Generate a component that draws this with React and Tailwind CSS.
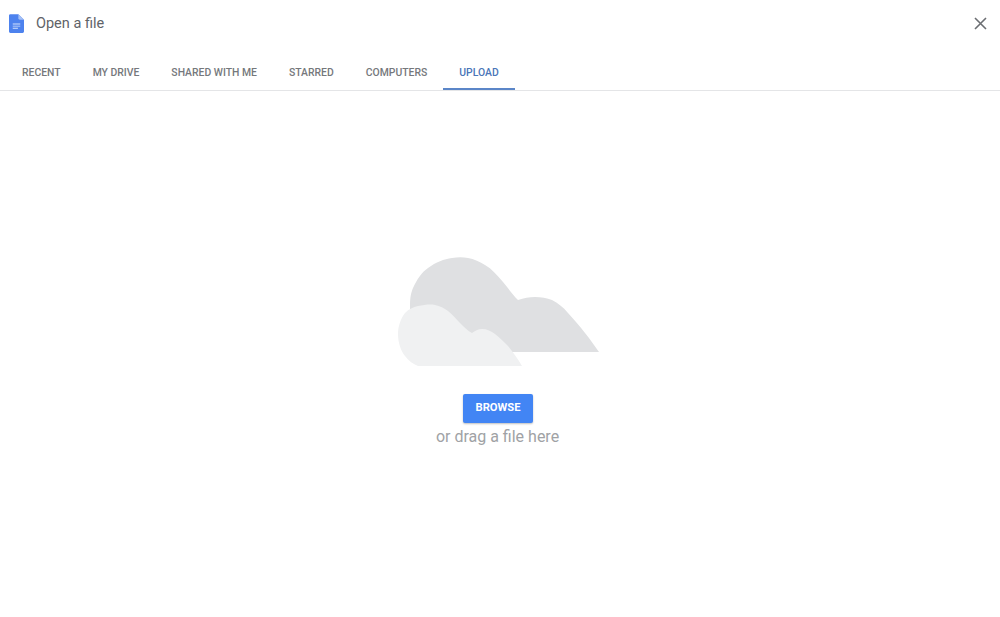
import React from "react";

const tabs = ["RECENT", "MY DRIVE", "SHARED WITH ME", "STARRED", "COMPUTERS", "UPLOAD"];

function DocsIcon() {
  return (
    <svg width="15" height="19" viewBox="0 0 16 20">
      <path d="M1.500 0H10l6 6v12.500a1.500 1.500 0 0 1-1.500 1.500h-13A1.500 1.500 0 0 1 0 18.500V1.500A1.500 1.500 0 0 1 1.500 0z" fill="#4d82ee" />
      <path d="M10 0l6 6h-4.500A1.500 1.500 0 0 1 10 4.500z" fill="#a6c1f6" />
      <path d="M4 10h8v1H4zM4 12.300h8v1H4zM4 14.600h5.500v1H4z" fill="#d5e2fb" />
    </svg>
  );
}

function Cloud() {
  return (
    <svg width="204" height="110" viewBox="0 0 204 110">
      <path
        d="M14 95V48C14 40 15 36 17 31C21 22 26 15 32 11C40 5 48 2 56 1C62 0 67 0 72 1C78 2 84 5 89 8C96 12 101 18 107 25C112 31 117 38 122 43C128 41 133 40 139 40C145 40 151 41 156 43C162 46 167 50 172 56C178 63 184 69 189 76C194 82 198 88 203 95z"
        fill="#dfe0e2"
      />
      <path
        d="M2 77C2 69 5 61 9 56C13 52 17 50 22 49C28 48 34 47 39 48C44 49 48 51 52 54C57 58 60 62 64 66C68 70 72 74 76 76C79 74 82 72 86 72C91 72 95 74 99 77C104 81 108 85 112 89C117 95 122 102 126 109H30C26 109 24 109 22 109C17 107 13 104 9 99C5 94 2 86 2 77z"
        fill="#f0f1f2"
      />
    </svg>
  );
}

export default function App() {
  return (
    <div className="w-[1000px] h-[617px] bg-white font-['Roboto',sans-serif] overflow-hidden">
      <div className="h-[46px] flex items-center pt-px pl-[9px] pr-[13px]">
        <DocsIcon />
        <span className="ml-[12px] text-[14.500px] text-[#5f6368]">Open a file</span>
        <svg className="ml-auto" width="13" height="13" viewBox="0 0 13 13">
          <path d="M1 1l11 11M12 1L1 12" stroke="#6b6e72" strokeWidth="1.600" fill="none" />
        </svg>
      </div>
      <div className="h-[45px] flex pl-[6px] border-b border-[#e4e5e7]">
        {tabs.map((t) => (
          <div
            key={t}
            className={
              t === "UPLOAD"
                ? "px-4 pt-[11px] h-[44px] flex items-center text-[10.400px] font-medium text-[#4a76b8] border-b-2 border-[#5b86c8]"
                : "px-4 pt-[11px] h-[44px] flex items-center text-[10.400px] font-medium text-[#75787c] border-b-2 border-transparent"
            }
          >
            {t}
          </div>
        ))}
      </div>
      <div className="flex flex-col items-center pt-[166px]">
        <div className="ml-[-4px]">
          <Cloud />
        </div>
        <button className="mt-[27px] ml-[-4px] w-[70px] h-[29px] rounded-[2px] bg-[#4285f4] text-white text-[11.200px] font-bold shadow-[0_1px_2px_rgba(0,0,0,0.25)]">
          BROWSE
        </button>
        <div className="mt-[2px] ml-[-5px] text-[16px] text-[#a0a2a5]">or drag a file here</div>
      </div>
    </div>
  );
}
